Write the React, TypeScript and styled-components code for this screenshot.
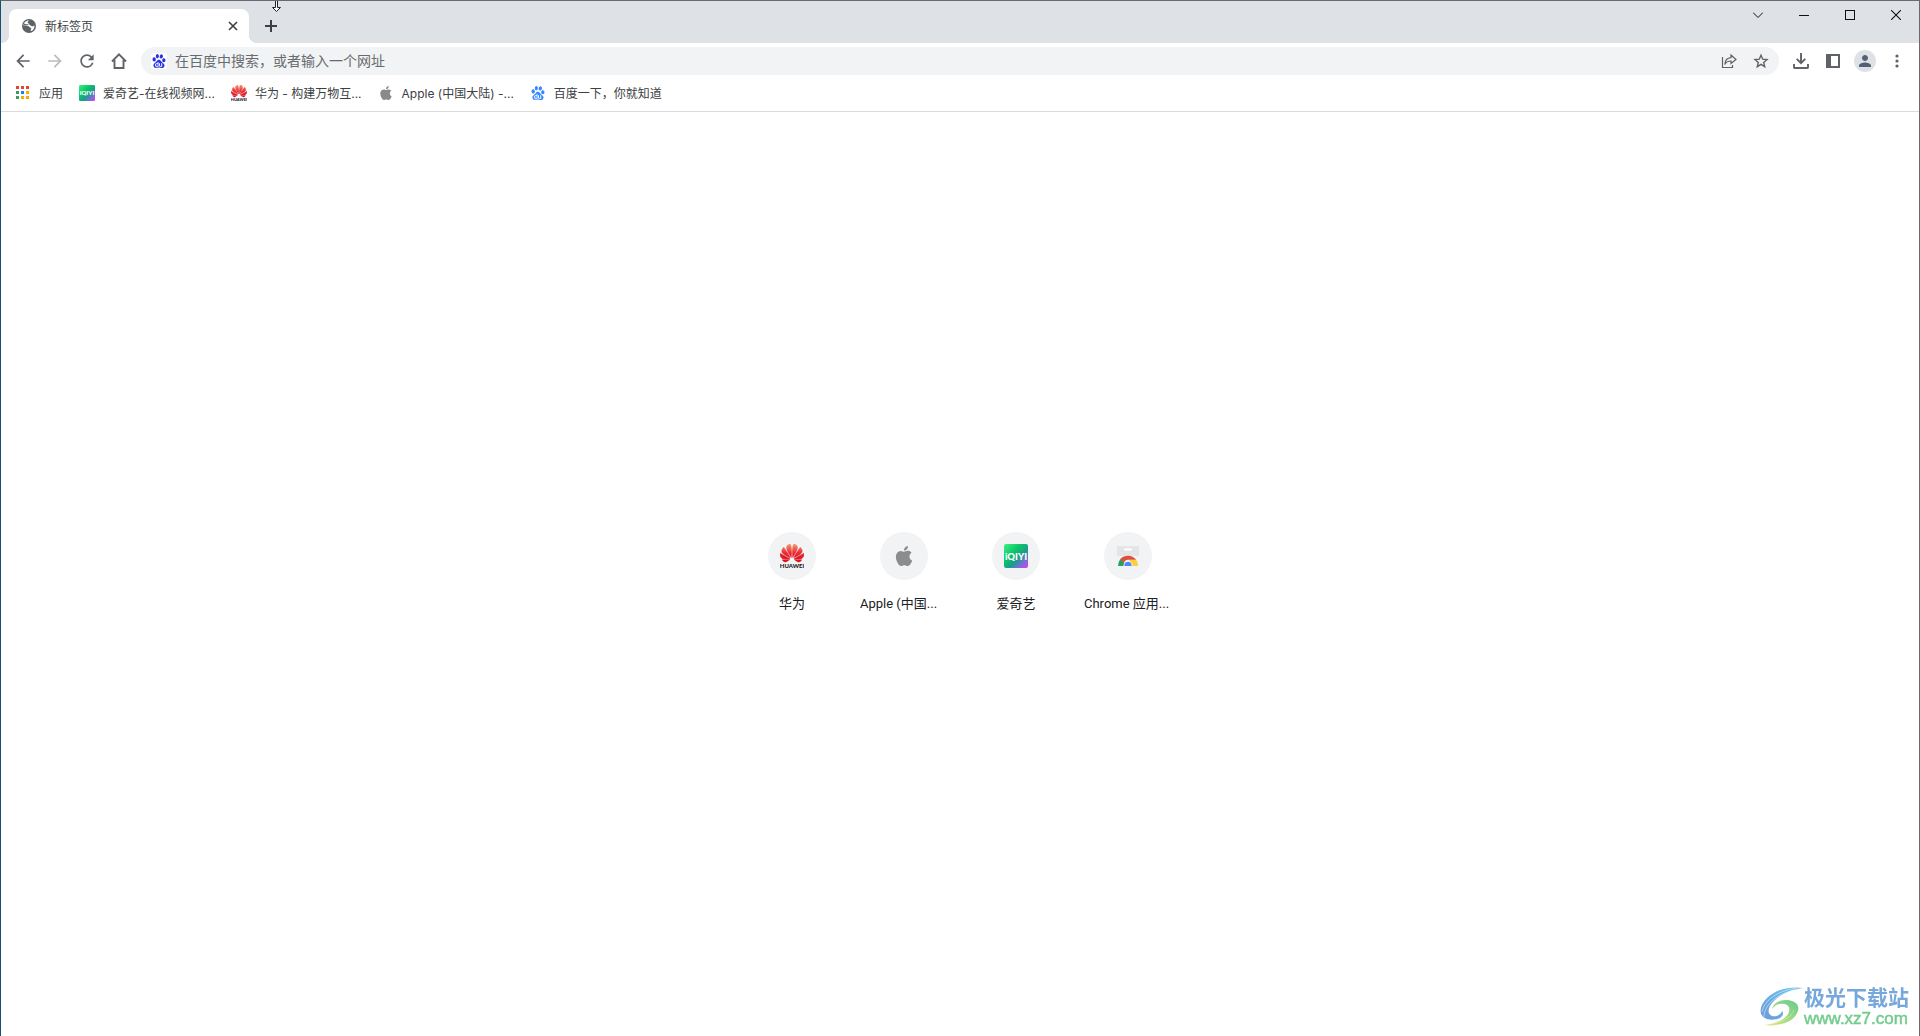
import React from 'react';
import styled, { createGlobalStyle, css } from 'styled-components';
import { SiBaidu, SiHuawei, SiApple } from 'react-icons/si';
import { MdArrowBack, MdArrowForward, MdRefresh, MdPerson } from 'react-icons/md';

const uiFont = '"Noto Sans", "Noto Sans CJK SC", sans-serif';
const labelFont = 'Inter, "Noto Sans CJK SC", sans-serif';
const pageFont = 'Roboto, "Noto Sans CJK SC", sans-serif';

const GlobalStyle = createGlobalStyle`
  * { box-sizing: border-box; }
  body { margin: 0; background: #fff; font-family: ${uiFont}; }
  button { margin: 0; padding: 0; border: 0; background: none; color: inherit; font: inherit; }
  a { color: inherit; text-decoration: none; }
  svg { display: block; flex: none; }
`;

const Window = styled.div`
  display: flex;
  flex-direction: column;
  min-height: 100vh;
  border: solid #6a6b6e;
  border-width: 1px 1px 0;
  border-left-color: #1b4f72;
  background: #fff;
`;

const TabStrip = styled.div`
  position: relative;
  display: flex;
  align-items: flex-start;
  height: 42px;
  padding-left: 8px;
  background: #dee1e6;
`;

const Tab = styled.div`
  position: relative;
  display: flex;
  align-items: center;
  gap: 8px;
  width: 240px;
  height: 34px;
  margin-top: 8px;
  padding: 0 8px 0 12px;
  border-radius: 8px 8px 0 0;
  background: #fff;
  color: #3c4043;
  font-size: 12px;
  &::before, &::after {
    content: '';
    position: absolute;
    bottom: 0;
    width: 8px;
    height: 8px;
  }
  &::before { left: -8px; background: radial-gradient(circle at 0 0, #dee1e6 8px, #fff 8px); }
  &::after { right: -8px; background: radial-gradient(circle at 100% 0, #dee1e6 8px, #fff 8px); }
`;

const TabTitle = styled.span`
  flex: 1;
`;

const SmallButton = styled.button`
  display: grid;
  place-items: center;
  width: 16px;
  height: 16px;
`;

const NewTabButton = styled.button`
  display: grid;
  place-items: center;
  width: 28px;
  height: 28px;
  margin: 11px 0 0 8px;
  color: #3c4043;
`;

const WindowControls = styled.div`
  display: flex;
  margin-left: auto;
`;

const ControlButton = styled.button`
  display: grid;
  place-items: center;
  width: 46px;
  height: 28px;
  color: #111;
`;

const ResizeCursor = styled.svg`
  position: absolute;
  left: 270px;
  top: 0;
`;

const Toolbar = styled.div`
  display: flex;
  align-items: center;
  height: 36px;
  padding: 0 6px;
`;

const ToolButton = styled.button<{ $muted?: boolean }>`
  display: grid;
  place-items: center;
  width: 32px;
  height: 32px;
  color: ${(p) => (p.$muted ? '#babcbe' : '#5f6368')};
`;

const Omnibox = styled.label`
  display: flex;
  align-items: center;
  flex: 1;
  height: 28px;
  margin: 0 6px;
  padding: 0 2px 0 10px;
  border-radius: 14px;
  background: #f1f3f4;
`;

const EngineBadge = styled.span`
  display: grid;
  place-items: center;
  width: 16px;
  height: 16px;
  border-radius: 2px;
  background: #fff;
  color: #2932e1;
`;

const AddressInput = styled.input`
  flex: 1;
  min-width: 0;
  height: 26px;
  margin-left: 8px;
  padding: 0 0 2px;
  border: 0;
  outline: 0;
  background: none;
  font: 14px ${uiFont};
  color: #202124;
  &::placeholder { color: #686b6f; opacity: 1; }
`;

const Avatar = styled.span`
  display: grid;
  place-items: center;
  width: 22px;
  height: 22px;
  border-radius: 50%;
  background: #dee1e6;
  color: #565f75;
`;

const BookmarkBar = styled.nav`
  display: flex;
  gap: 16px;
  height: 33px;
  padding: 0 14px 4px;
  border-bottom: 1px solid #dadce0;
`;

const Bookmark = styled.a`
  display: flex;
  align-items: center;
  gap: 8px;
  color: #3c4043;
`;

const BookmarkTitle = styled.span`
  padding-top: 2px;
  font: 12px/16px ${labelFont};
  white-space: nowrap;
`;

const Page = styled.main`
  display: flex;
  flex: 1;
  align-items: center;
  justify-content: center;
  padding-bottom: 4px;
`;

const ShortcutGrid = styled.div`
  display: grid;
  grid-template-columns: repeat(4, 112px);
`;

const Shortcut = styled.a`
  display: flex;
  flex-direction: column;
  align-items: center;
  height: 112px;
  padding-top: 16px;
  color: #202124;
  font: 13px/20px ${pageFont};
  white-space: nowrap;
`;

const ShortcutIcon = styled.span`
  display: grid;
  place-items: center;
  width: 48px;
  height: 48px;
  margin-bottom: 14px;
  border-radius: 50%;
  background: #f1f3f4;
`;

const ShortcutTitle = styled.span<{ $clipped: boolean }>`
  width: 88px;
  text-align: ${(p) => (p.$clipped ? 'left' : 'center')};
`;

const Watermark = styled.div`
  position: fixed;
  right: 11px;
  bottom: 6px;
  display: flex;
  align-items: center;
`;

const WatermarkText = styled.div`
  display: flex;
  flex-direction: column;
`;

const watermarkLine = css`
  white-space: nowrap;
`;

const WatermarkName = styled.span`
  ${watermarkLine}
  color: #76a8dc;
  font: 700 21px/24px "Noto Sans CJK SC", sans-serif;
`;

const WatermarkUrl = styled.span`
  ${watermarkLine}
  color: #72cc8e;
  -webkit-text-stroke: 0.5px #72cc8e;
  font: 17px/22px "Liberation Sans", sans-serif;
`;

function GlobeIcon() {
  return (
    <svg width="16" height="16" viewBox="0 0 16 16" aria-hidden="true">
      <circle cx="8" cy="8" r="7" fill="#5f6368" />
      <path d="M8.200 2.600c-.9.600-1.800 1.300-1.500 2.200.3.700 1.300.5 1.500 1.200.2.900.4 1.400 1.400 1.400.9 0 .9 1 1.700 1 .9 0 1-.9 2.200-.7.100 2.600-1.400 4.700-3.600 5.400-.5-.6-.2-1.400.2-2 .5-.8-.2-1.500-1-1.700-1.200-.3-1.300-1.500-2.600-1.600-1.200-.1-2.700.4-4-.3.100-2.600 2.400-5.100 5.700-4.900z" fill="#fff" />
      <path d="M3.200 5.400c1 .1 1.500.9 2.600.8 1 0 1.300-.8 2.200-.5-.3 1-1.600.8-2.100 1.600-.8.500-2.300.3-3.300.2zM7 8.800c1 .4 1.500 1.200 2.500 1.500-.3.900-1.200 1.200-2 .8-.7-.5-.9-1.500-.5-2.300z" fill="#5f6368" />
    </svg>
  );
}

function IqiyiLogo({ size }: { size: number }) {
  return (
    <svg width={size} height={size} viewBox="0 0 24 24" aria-hidden="true">
      <defs>
        <linearGradient id="iqiyi" x1="0" y1="0" x2="1" y2="1">
          <stop offset="0" stopColor="#3ff08c" />
          <stop offset=".35" stopColor="#0cc765" />
          <stop offset=".6" stopColor="#1d9c8c" />
          <stop offset=".8" stopColor="#7a6ed8" />
          <stop offset="1" stopColor="#d93cf5" />
        </linearGradient>
      </defs>
      <rect width="24" height="24" rx="2" fill="url(#iqiyi)" />
      <text x="12" y="15.500" textAnchor="middle" fill="#fff" fontFamily="Lato, sans-serif" fontWeight="900" fontSize="9.500">iQIYI</text>
    </svg>
  );
}

function HuaweiLogo({ size }: { size: number }) {
  return (
    <svg width={size} height={size} viewBox="0 0 24 24" aria-hidden="true">
      <defs>
        <linearGradient id="petals" x1="0" y1="0" x2="0" y2="1">
          <stop offset="0" stopColor="#f59a72" />
          <stop offset=".5" stopColor="#ea2a34" />
          <stop offset="1" stopColor="#d80c18" />
        </linearGradient>
      </defs>
      <g transform="translate(0 -3)">
        <SiHuawei size={24} style={{ fill: 'url(#petals)', stroke: 'url(#petals)', strokeWidth: 0.4 }} />
      </g>
      <text x="12" y="24" textAnchor="middle" fill="#222" fontFamily="Lato, sans-serif" fontWeight="900" fontSize="6">HUAWEI</text>
    </svg>
  );
}

function WebStoreLogo() {
  return (
    <svg width="24" height="24" viewBox="0 0 24 24" aria-hidden="true">
      <path d="M1 2h22v10H1z" fill="#e4e5e6" />
      <rect x="8" y="4.500" width="8" height="2" rx="1" fill="#fff" />
      <path d="M2 22a10 10.500 0 0 1 2.500-7L9 19.500V22z" fill="#1da462" />
      <path d="M22 22a10 10.500 0 0 0-1.800-6.200H13L15.500 22z" fill="#ffcd40" />
      <path d="M4.300 15a10 9 0 0 1 15.900.8H12a5 5 0 0 0-4.300 3.700z" fill="#dd4f43" />
      <path d="M7.400 22a4.600 5 0 0 1 9.200 0z" fill="#fff" />
      <path d="M8.300 22a3.700 4.200 0 0 1 7.400 0z" fill="#4c8bf5" />
    </svg>
  );
}

function AppsGrid() {
  const colors = ['#ea4335', '#ea4335', '#ea4335', '#34a060', '#1a82f0', '#f9ab00', '#34a060', '#f9ab00', '#f9ab00'];
  return (
    <svg width="16" height="16" viewBox="0 0 16 16" aria-hidden="true">
      {colors.map((c, i) => (
        <rect key={i} x={1 + (i % 3) * 5} y={1 + Math.floor(i / 3) * 5} width="3" height="3" fill={c} />
      ))}
    </svg>
  );
}

function AuroraLogo() {
  return (
    <svg width="46" height="44" viewBox="0 0 46 44" aria-hidden="true">
      <defs>
        <linearGradient id="sky" x1="0" y1="1" x2="1" y2="0">
          <stop offset="0" stopColor="#6d9bd8" />
          <stop offset="1" stopColor="#66c4f2" />
        </linearGradient>
        <linearGradient id="leaf" x1="0" y1="1" x2="1" y2="0">
          <stop offset="0" stopColor="#e4ea7c" />
          <stop offset="1" stopColor="#62c98c" />
        </linearGradient>
      </defs>
      <path d="M45 3C33 1 18 4 9 13 1 21 0 31 9 34c4 1 9 1 13-1 3-2 4-5 2-7-1 4-6 6-10 5-5-2-4-8 0-13C21 10 31 5 45 3z" fill="url(#sky)" />
      <path d="M14 24c1-6 8-9 14-9 9 0 14 5 12 11-3 10-17 16-34 14 11-1 23-6 25-13 2-6-3-9-9-8-3 0-6 2-8 5z" fill="url(#leaf)" />
      <path d="M4 27C6 16 18 6 39 3M6 32C6 20 19 9 36 5" fill="none" stroke="#fff" strokeWidth=".7" opacity=".7" />
      <path d="M12 39c12-2 22-7 24-14" fill="none" stroke="#fff" strokeWidth=".6" opacity=".5" />
    </svg>
  );
}

const bookmarks = [
  { title: '应用', icon: <AppsGrid /> },
  { title: '爱奇艺-在线视频网...', icon: <IqiyiLogo size={16} /> },
  { title: '华为 - 构建万物互...', icon: <HuaweiLogo size={16} /> },
  { title: 'Apple (中国大陆) -...', icon: <SiApple size={14} color="#8a8a8a" style={{ margin: '0 1px' }} /> },
  { title: '百度一下，你就知道', icon: <SiBaidu size={14} color="#3388ff" style={{ margin: '0 1px' }} /> },
];

const shortcuts = [
  { title: '华为', icon: <HuaweiLogo size={24} /> },
  { title: 'Apple (中国...', icon: <SiApple size={20} color="#8c8c8c" />, clipped: true },
  { title: '爱奇艺', icon: <IqiyiLogo size={24} /> },
  { title: 'Chrome 应用...', icon: <WebStoreLogo />, clipped: true },
];

export default function App() {
  return (
    <>
      <GlobalStyle />
      <Window>
        <TabStrip>
          <Tab>
            <GlobeIcon />
            <TabTitle>新标签页</TabTitle>
            <SmallButton aria-label="关闭标签页">
              <svg width="10" height="10" viewBox="0 0 10 10"><path d="M1 1l8 8M9 1L1 9" stroke="#3c4043" strokeWidth="1.600" /></svg>
            </SmallButton>
          </Tab>
          <NewTabButton aria-label="新标签页">
            <svg width="12" height="12" viewBox="0 0 12 12"><path d="M6 0v12M0 6h12" stroke="currentColor" strokeWidth="2" /></svg>
          </NewTabButton>
          <WindowControls>
            <ControlButton aria-label="搜索标签页">
              <svg width="10" height="6" viewBox="0 0 10 6"><path d="M0 .5L5 5.500 10 .5" fill="none" stroke="currentColor" /></svg>
            </ControlButton>
            <ControlButton aria-label="最小化">
              <svg width="10" height="10" viewBox="0 0 10 10"><path d="M0 5.500h10" stroke="currentColor" /></svg>
            </ControlButton>
            <ControlButton aria-label="最大化">
              <svg width="10" height="10" viewBox="0 0 10 10"><rect x=".5" y=".5" width="9" height="9" fill="none" stroke="currentColor" /></svg>
            </ControlButton>
            <ControlButton aria-label="关闭">
              <svg width="10" height="10" viewBox="0 0 10 10"><path d="M0 0l10 10M10 0L0 10" stroke="currentColor" strokeWidth="1.100" /></svg>
            </ControlButton>
          </WindowControls>
          <ResizeCursor width="11" height="12" viewBox="0 0 11 12" aria-hidden="true">
            <path d="M4.500 -1v7.500h-3l4 4 4-4h-3V-1z" fill="#fff" stroke="#222" />
          </ResizeCursor>
        </TabStrip>

        <Toolbar>
          <ToolButton aria-label="后退"><MdArrowBack size={20} /></ToolButton>
          <ToolButton aria-label="前进" $muted><MdArrowForward size={20} /></ToolButton>
          <ToolButton aria-label="重新加载"><MdRefresh size={20} /></ToolButton>
          <ToolButton aria-label="主页">
            <svg width="16" height="16" viewBox="0 0 16 16"><path d="M1 8.500L8 1.400l7 7.100M3.500 7v8h9V7" fill="none" stroke="currentColor" strokeWidth="1.900" /></svg>
          </ToolButton>
          <Omnibox>
            <EngineBadge><SiBaidu size={14} /></EngineBadge>
            <AddressInput aria-label="地址和搜索栏" placeholder="在百度中搜索，或者输入一个网址" />
            <ToolButton aria-label="分享">
              <svg width="16" height="16" viewBox="0 0 16 16"><path d="M1.500 4v10.500h10V12M10 2l5 4.500-5 4V8C7 8 5 9 3.800 11.500 4 7.500 6 5 10 4.700z" fill="none" stroke="currentColor" strokeWidth="1.200" /></svg>
            </ToolButton>
            <ToolButton aria-label="添加书签">
              <svg width="16" height="16" viewBox="0 0 16 16"><path d="M8 2.200l1.700 4 4.300.4-3.300 2.800 1 4.300L8 11.400l-3.700 2.300 1-4.300L2 6.600l4.300-.4z" fill="none" stroke="currentColor" strokeWidth="1.400" /></svg>
            </ToolButton>
          </Omnibox>
          <ToolButton aria-label="下载">
            <svg width="16" height="16" viewBox="0 0 16 16"><path d="M8 0v10M3.700 5.900L8 10.200l4.300-4.300M1 11v3.500q0 .5.500.5h13q.5 0 .5-.5V11" fill="none" stroke="currentColor" strokeWidth="1.900" /></svg>
          </ToolButton>
          <ToolButton aria-label="侧边栏">
            <svg width="14" height="14" viewBox="0 0 14 14"><path d="M0 0h14v14H0zM5 2v10h7V2z" fill="currentColor" fillRule="evenodd" /></svg>
          </ToolButton>
          <ToolButton aria-label="个人资料"><Avatar><MdPerson size={18} /></Avatar></ToolButton>
          <ToolButton aria-label="菜单">
            <svg width="4" height="14" viewBox="0 0 4 14" fill="currentColor"><circle cx="2" cy="2" r="1.600" /><circle cx="2" cy="7" r="1.600" /><circle cx="2" cy="12" r="1.600" /></svg>
          </ToolButton>
        </Toolbar>

        <BookmarkBar>
          {bookmarks.map((b) => (
            <Bookmark key={b.title} href="#">{b.icon}<BookmarkTitle>{b.title}</BookmarkTitle></Bookmark>
          ))}
        </BookmarkBar>

        <Page>
          <ShortcutGrid>
            {shortcuts.map((s) => (
              <Shortcut key={s.title} href="#">
                <ShortcutIcon>{s.icon}</ShortcutIcon>
                <ShortcutTitle $clipped={Boolean(s.clipped)}>{s.title}</ShortcutTitle>
              </Shortcut>
            ))}
          </ShortcutGrid>
        </Page>

        <Watermark>
          <AuroraLogo />
          <WatermarkText>
            <WatermarkName>极光下载站</WatermarkName>
            <WatermarkUrl>www.xz7.com</WatermarkUrl>
          </WatermarkText>
        </Watermark>
      </Window>
    </>
  );
}
